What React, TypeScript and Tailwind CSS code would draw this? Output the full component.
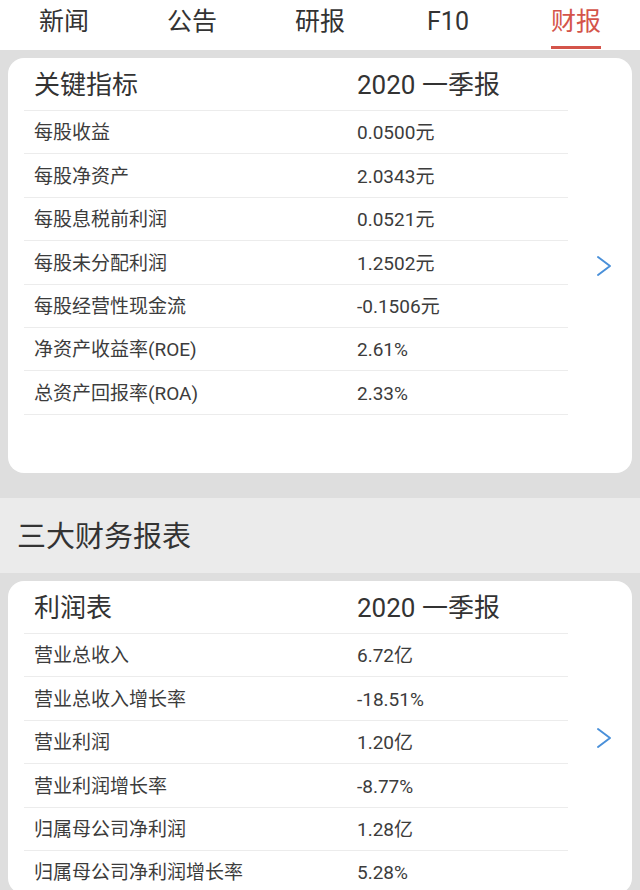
const tabs = ["新闻", "公告", "研报", "F10", "财报"];

const keyRows = [
  ["每股收益", "0.0500元"],
  ["每股净资产", "2.0343元"],
  ["每股息税前利润", "0.0521元"],
  ["每股未分配利润", "1.2502元"],
  ["每股经营性现金流", "-0.1506元"],
  ["净资产收益率(ROE)", "2.61%"],
  ["总资产回报率(ROA)", "2.33%"],
];

const profitRows = [
  ["营业总收入", "6.72亿"],
  ["营业总收入增长率", "-18.51%"],
  ["营业利润", "1.20亿"],
  ["营业利润增长率", "-8.77%"],
  ["归属母公司净利润", "1.28亿"],
  ["归属母公司净利润增长率", "5.28%"],
];

const Chevron = () => (
  <svg width="18" height="22" viewBox="0 0 18 22" fill="none">
    <path d="M3 2 L15 11 L3 20" stroke="#4a90d9" strokeWidth="2" strokeLinecap="round" strokeLinejoin="round" />
  </svg>
);

const Card = ({ title, rows, extra }: { title: string; rows: string[][]; extra?: boolean }) => (
  <div className={`flex rounded-2xl bg-white ${extra ? "h-[415px]" : ""}`}>
    <div className="ml-4 w-[544px]">
      <div className="flex h-[53px] items-center border-b border-[#ececec] pl-[10px] pt-[3px] text-[26px] text-[#333]">
        <span className="w-[323px]">{title}</span>
        <span>2020 一季报</span>
      </div>
      {rows.map(([k, v]) => (
        <div key={k} className="flex h-[43.4px] items-center border-b border-[#ececec] pl-[10px] pt-[3px] text-[19px] text-[#3c3c3c]">
          <span className="w-[323px]">{k}</span>
          <span>{v}</span>
        </div>
      ))}
    </div>
    <div className="flex flex-1 items-center justify-center pl-2">
      <Chevron />
    </div>
  </div>
);

export default function App() {
  return (
    <div className="h-[890px] overflow-hidden bg-[#dedede]" style={{ fontFamily: 'Roboto, "Noto Sans CJK SC", sans-serif' }}>
      <div className="grid h-[50px] grid-cols-5 bg-white">
        {tabs.map((t, i) => (
          <div key={t} className="flex justify-center pt-[7px]">
            <div className={`relative h-[43px] text-[25px] leading-[30px] ${i === 4 ? "text-[#d4544a]" : "text-[#333]"}`}>
              {t}
              {i === 4 && <div className="absolute bottom-[1px] left-0 right-0 h-[3px] bg-[#d4544a]" />}
            </div>
          </div>
        ))}
      </div>
      <div className="px-2 pb-[25px] pt-[8px]">
        <Card title="关键指标" rows={keyRows} extra />
      </div>
      <div className="flex h-[75px] items-center bg-[#ebebeb] pl-[17px] pt-[5px] text-[29px] text-[#333]">三大财务报表</div>
      <div className="px-2 pt-2">
        <Card title="利润表" rows={profitRows} />
      </div>
    </div>
  );
}
